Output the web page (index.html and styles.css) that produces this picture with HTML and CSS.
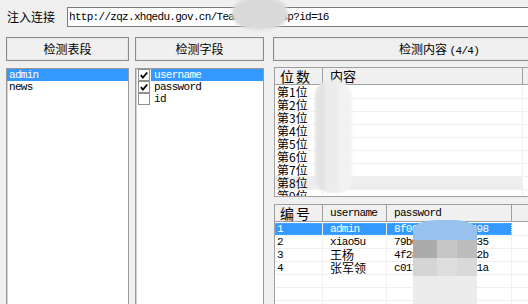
FILE: index.html
```html
<!DOCTYPE html>
<html>
<head>
<meta charset="utf-8">
<link rel="stylesheet" href="styles.css">
</head>
<body>
<div class="urlbar">
  <span class="label">注入连接</span>
  <div class="url">http://zqz.xhqedu.gov.cn/Teacher/v.asp?id=16</div>
</div>
<div class="main">
  <div class="col col-tables">
    <div class="btn">检测表段</div>
    <div class="listbox">
      <div class="item sel">admin</div>
      <div class="item">news</div>
    </div>
  </div>
  <div class="col col-fields">
    <div class="btn">检测字段</div>
    <div class="listbox">
      <div class="citem"><span class="box"><svg viewBox="0 0 11 11" width="11" height="11"><path d="M2 5.2 L4.3 7.8 L9 2.2" fill="none" stroke="#000" stroke-width="2"/></svg></span><span class="ctext sel">username</span></div>
      <div class="citem"><span class="box"><svg viewBox="0 0 11 11" width="11" height="11"><path d="M2 5.2 L4.3 7.8 L9 2.2" fill="none" stroke="#000" stroke-width="2"/></svg></span><span class="ctext">password</span></div>
      <div class="citem"><span class="box"></span><span class="ctext">id</span></div>
    </div>
  </div>
  <div class="col col-content">
    <div class="btn">检测内容 <span class="mono">(4/4)</span></div>
    <div class="lv lv-pos">
      <div class="lv-head">
        <div class="hc hc-first">位数</div>
        <div class="hc">内容</div>
        <div class="hc hc-fill"></div>
      </div>
      <div class="lv-body">
        <div class="row"><div class="c c-first">第1位</div><div class="c"></div><div class="c"></div></div>
        <div class="row"><div class="c c-first">第2位</div><div class="c"></div><div class="c"></div></div>
        <div class="row"><div class="c c-first">第3位</div><div class="c"></div><div class="c"></div></div>
        <div class="row"><div class="c c-first">第4位</div><div class="c"></div><div class="c"></div></div>
        <div class="row"><div class="c c-first">第5位</div><div class="c"></div><div class="c"></div></div>
        <div class="row"><div class="c c-first">第6位</div><div class="c"></div><div class="c"></div></div>
        <div class="row"><div class="c c-first">第7位</div><div class="c"></div><div class="c"></div></div>
        <div class="row hot"><div class="c c-first">第8位</div><div class="c"></div><div class="c"></div></div>
        <div class="row"><div class="c c-first">第9位</div><div class="c"></div><div class="c"></div></div>
      </div>
    </div>
    <div class="lv lv-data">
      <div class="lv-head">
        <div class="hc hc-first">编号</div>
        <div class="hc mono">username</div>
        <div class="hc mono">password</div>
        <div class="hc hc-fill"></div>
      </div>
      <div class="lv-body">
        <div class="row sel"><div class="c c-first mono">1</div><div class="c mono">admin</div><div class="c mono">8f00c3e5a7d1b498</div><div class="c c-fill"></div></div>
        <div class="row"><div class="c c-first mono">2</div><div class="c mono">xiao5u</div><div class="c mono">79b0a64e2f91cd35</div><div class="c c-fill"></div></div>
        <div class="row"><div class="c c-first mono">3</div><div class="c cjk">王杨</div><div class="c mono">4f28e9d03b7a152b</div><div class="c c-fill"></div></div>
        <div class="row"><div class="c c-first mono">4</div><div class="c cjk">张军领</div><div class="c mono">c017b85f4e6d931a</div><div class="c c-fill"></div></div>
        <div class="row"><div class="c c-first"></div><div class="c"></div><div class="c"></div><div class="c c-fill"></div></div>
        <div class="row"><div class="c c-first"></div><div class="c"></div><div class="c"></div><div class="c c-fill"></div></div>
        <div class="row"><div class="c c-first"></div><div class="c"></div><div class="c"></div><div class="c c-fill"></div></div>
      </div>
    </div>
  </div>
</div>
<div class="blob blob-top"></div>
<div class="blob blob-mid"></div>
<div class="blob blob-bot"></div>
</body>
</html>
```

FILE: styles.css
```css
html, body {
  margin: 0;
  padding: 0;
}
body {
  width: 528px;
  height: 304px;
  overflow: hidden;
  position: relative;
  background: #f0f0f0;
  color: #000;
  font-family: "Noto Sans CJK SC", sans-serif;
  font-size: 12px;
}
.mono {
  font-family: "Liberation Mono", "Noto Sans CJK SC", monospace;
  font-size: 11px;
  letter-spacing: -0.7px;
}
.cjk {
  font-family: "Noto Sans CJK SC", sans-serif;
  font-size: 12px;
}

/* url bar */
.urlbar {
  display: flex;
  align-items: center;
  padding: 6px 0 0 7px;
  height: 21px;
  width: 700px;
}
.label {
  width: 60px;
  line-height: 20px;
  font-size: 12px;
}
.url {
  box-sizing: border-box;
  width: 500px;
  height: 20px;
  background: #fff;
  border: 1px solid #7a7a7a;
  padding-left: 1px;
  line-height: 18px;
  white-space: nowrap;
  overflow: hidden;
  font-family: "Liberation Mono", monospace;
  font-size: 11px;
  letter-spacing: -0.7px;
}

/* columns */
.main {
  display: flex;
  align-items: flex-start;
  padding: 10px 0 0 6px;
  width: 700px;
}
.col {
  display: flex;
  flex-direction: column;
}
.col-tables { width: 123px; }
.col-fields { width: 129px; margin-left: 6px; }
.col-content { width: 332px; margin-left: 9px; }

.btn {
  box-sizing: border-box;
  height: 24px;
  border: 1px solid #8a8a8a;
  box-shadow: inset 0 0 0 1px #e6e6e6;
  background: #f0f0f0;
  text-align: center;
  line-height: 22px;
  font-size: 12px;
}
.btn .mono { font-size: 11px; }

.listbox {
  box-sizing: border-box;
  margin-top: 7px;
  height: 240px;
  background: #fff;
  border: 1px solid #9a9a9a;
  box-shadow: inset 1px 1px 0 #cfcfcf;
  font-family: "Liberation Mono", monospace;
  font-size: 11px;
  letter-spacing: -0.7px;
}
.item {
  height: 12px;
  line-height: 12px;
  padding-left: 2px;
  white-space: nowrap;
}
.sel {
  background: #3399ff;
  color: #fff;
}
.citem {
  display: flex;
  align-items: center;
  height: 12px;
  padding-left: 2px;
}
.box {
  box-sizing: border-box;
  width: 12px;
  height: 12px;
  border: 1px solid #8f8f8f;
  background: #fff;
  display: flex;
  align-items: center;
  justify-content: center;
}
.box svg { display: block; }
.ctext {
  flex: 1;
  margin-left: 1px;
  height: 12px;
  line-height: 12px;
  padding-left: 3px;
  white-space: nowrap;
}

/* list views */
.lv {
  box-sizing: border-box;
  background: #fff;
  border: 1px solid #a0a0a0;
  overflow: hidden;
}
.lv-pos {
  margin: 6px 0 0 1px;
  height: 130px;
}
.lv-data {
  margin: 7px 0 0 1px;
  height: 110px;
}
.lv-head {
  display: grid;
  height: 17px;
  box-sizing: border-box;
  border-bottom: 1px solid #a0a0a0;
  background: #f0f0f0;
}
.lv-pos .lv-head, .lv-pos .row { grid-template-columns: 48px 200px 1fr; }
.lv-data .lv-head, .lv-data .row { grid-template-columns: 48px 64px 125px 1fr; }
.hc {
  border-right: 1px solid #a0a0a0;
  padding-left: 7px;
  line-height: 16px;
  white-space: nowrap;
}
.hc-first {
  padding-left: 5px;
  font-size: 14px;
  letter-spacing: 2px;
}
.lv-pos .hc:nth-child(2) { font-size: 13px; letter-spacing: 0; }
.hc-fill { border-right: none; }
.lv-head .mono { line-height: 16px; }

.lv-body { padding-top: 1px; }
.row {
  display: grid;
  height: 13px;
  box-sizing: border-box;
  border-bottom: 1px solid #f0f0f0;
}
.c {
  border-right: 1px solid #f0f0f0;
  padding-left: 7px;
  line-height: 12px;
  height: 12px;
  white-space: nowrap;
  overflow: hidden;
}
.c-first { padding-left: 2px; }
.lv-pos .c-first { font-size: 12px; line-height: 12px; overflow: visible; }
.c-fill { border-right: none; }
.row.hot .c { background: #eeeeee; }
.row.hot .c:last-child { background: #fff; }
.row.sel {
  background: transparent;
}
.row.sel .c { background: #3399ff; color: #fff; }
.row.sel .c-fill { background: #fff; }
.lv-data .row.sel {
  position: relative;
}
.lv-data .row.sel::after {
  content: "";
  position: absolute;
  left: 0;
  top: 0;
  width: 237px;
  height: 12px;
  box-sizing: border-box;
  border: 1px dotted #f0902a;
}

/* privacy blur blobs laid over the screenshot */
.blob {
  position: absolute;
  pointer-events: none;
}
.blob-top {
  left: 232px;
  top: -3px;
  width: 56px;
  height: 33px;
  border-radius: 48% / 45%;
  background: #dadada;
  filter: blur(1.5px);
}
.blob-mid {
  left: 315px;
  top: 80px;
  width: 37px;
  height: 113px;
  border-radius: 16px 18px 14px 16px;
  background: linear-gradient(to right, #e4e4e4 0 10px, #ececec 10px 24px, #f2f2f2 24px);
  filter: blur(1px);
}
.blob-bot {
  left: 413px;
  top: 220px;
  width: 64px;
  height: 90px;
  border-radius: 24px 24px 8px 8px / 10px 10px 8px 8px;
  background:
    linear-gradient(to bottom, #98c2ee 0 20px, transparent 20px),
    linear-gradient(to right, #ababab 0 24px, #c6c6c6 24px 44px, #bcbcbc 44px) 0 20px / 100% 18px no-repeat,
    linear-gradient(to right, #d5d5d5 0 24px, #dedede 24px 44px, #d9d9d9 44px) 0 38px / 100% 18px no-repeat,
    #ececec;
  filter: blur(0.5px);
}
```
